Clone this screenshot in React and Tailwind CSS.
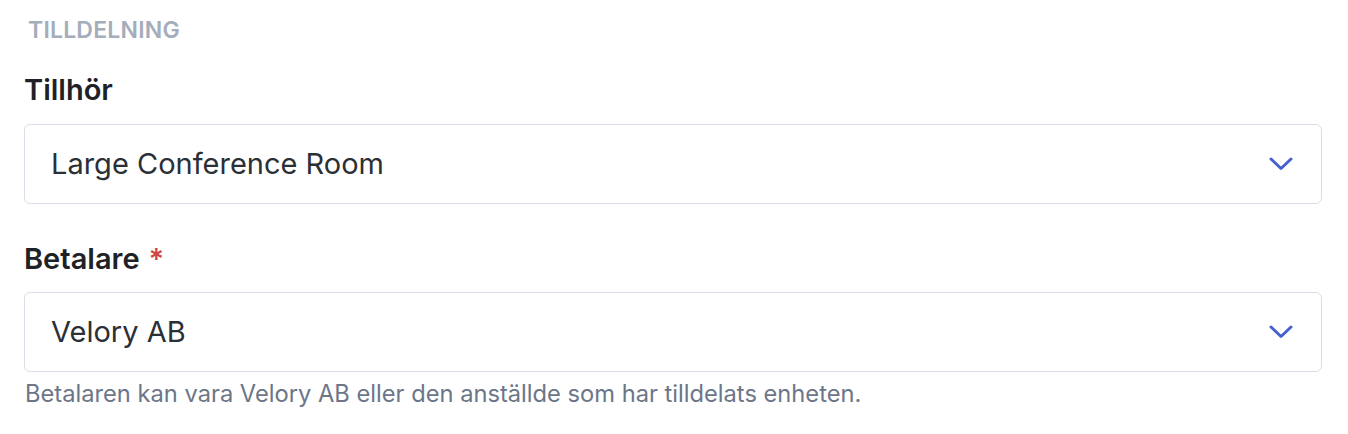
export default function App() {
  const font = { fontFamily: "Inter, 'Noto Sans', sans-serif" };

  const Chevron = () => (
    <svg width="24" height="14" viewBox="0 0 24 14" fill="none" className="shrink-0">
      <path d="M2 2l10 9.5L22 2" stroke="#4760cf" strokeWidth="3" strokeLinecap="round" strokeLinejoin="round" />
    </svg>
  );

  const Select = ({ value }) => (
    <div className="flex h-[80px] items-center justify-between rounded-[6px] border border-[#d9dde6] bg-white pl-[26px] pr-[28px]">
      <span className="text-[29px] leading-[36px] text-[#2b2f36]">{value}</span>
      <Chevron />
    </div>
  );

  return (
    <div className="min-h-screen w-full bg-white pl-[24px] pr-[26px] pt-[16px]" style={font}>
      <div className="pl-[4px] text-[23px] font-semibold leading-[28px] tracking-[0.2px] text-[#a4adba]">
        TILLDELNING
      </div>

      <div className="mt-[28px] text-[29px] font-semibold leading-[35px] text-[#1e2227]">Tillhör</div>
      <div className="mt-[17px]">
        <Select value="Large Conference Room" />
      </div>

      <div className="mt-[37px] flex items-baseline gap-[9px] text-[29px] font-semibold leading-[35px] text-[#1e2227]">
        <span>Betalare</span>
        <span className="text-[#d04545]">*</span>
      </div>
      <div className="mt-[16px]">
        <Select value="Velory AB" />
      </div>
      <div className="mt-[7px] pl-[1px] text-[23.7px] leading-[30px] text-[#6c7688]">
        Betalaren kan vara Velory AB eller den anställde som har tilldelats enheten.
      </div>
    </div>
  );
}
